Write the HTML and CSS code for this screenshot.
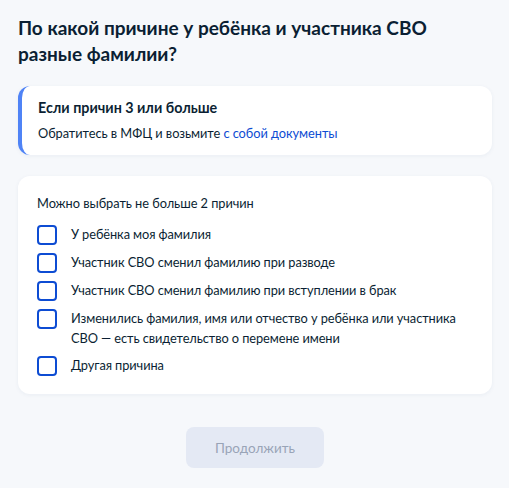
FILE: index.html
```html
<!DOCTYPE html>
<html lang="ru">
<head>
<meta charset="utf-8">
<link rel="stylesheet" href="styles.css">
</head>
<body>
<main class="page">
  <h1 class="title">По какой причине у ребёнка и участника СВО разные фамилии?</h1>
  <section class="info">
    <div class="info-title">Если причин 3 или больше</div>
    <div class="info-text">Обратитесь в МФЦ и возьмите <a class="link" href="#">с собой документы</a></div>
  </section>
  <section class="card">
    <div class="hint">Можно выбрать не больше 2 причин</div>
    <ul class="options">
      <li class="option"><span class="box"></span><span class="label">У ребёнка моя фамилия</span></li>
      <li class="option"><span class="box"></span><span class="label">Участник СВО сменил фамилию при разводе</span></li>
      <li class="option"><span class="box"></span><span class="label">Участник СВО сменил фамилию при вступлении в брак</span></li>
      <li class="option"><span class="box"></span><span class="label">Изменились фамилия, имя или отчество у ребёнка или участника СВО — есть свидетельство о перемене имени</span></li>
      <li class="option"><span class="box"></span><span class="label">Другая причина</span></li>
    </ul>
  </section>
  <div class="actions">
    <button class="btn" type="button">Продолжить</button>
  </div>
</main>
</body>
</html>
```

FILE: styles.css
```css
* { box-sizing: border-box; }
html, body { margin: 0; padding: 0; }
body {
  background: #f6f8fb;
  font-family: Lato, "Noto Sans", sans-serif;
  color: #0b1f33;
}
.page {
  padding: 15px 17px 0 18px;
}
.title {
  margin: 0;
  font-size: 19px;
  line-height: 26px;
  font-weight: 700;
  padding-right: 50px;
}
.info {
  margin-top: 19px;
  background: #fff;
  border-radius: 12px;
  border-left: 4px solid #4f83f6;
  padding: 12px 16px 12px 16px;
  box-shadow: 0 1px 4px rgba(30, 60, 120, 0.06);
}
.info-title {
  font-size: 14.3px;
  font-weight: 700;
  line-height: 20px;
}
.info-text {
  margin-top: 5px;
  font-size: 12.8px;
  letter-spacing: -0.05px;
  line-height: 20px;
}
.link {
  color: #0d4cd3;
  text-decoration: none;
}
.card {
  margin-top: 21px;
  background: #fff;
  border-radius: 12px;
  padding: 17px 14px 18px 19px;
  box-shadow: 0 1px 4px rgba(30, 60, 120, 0.06);
}
.hint {
  font-size: 12.8px;
  letter-spacing: -0.05px;
  line-height: 20px;
}
.options {
  list-style: none;
  margin: 12px 0 0 0;
  padding: 0;
  display: flex;
  flex-direction: column;
  gap: 8px;
}
.option {
  display: flex;
  align-items: flex-start;
  gap: 14px;
  font-size: 12.8px;
  letter-spacing: -0.08px;
  line-height: 20px;
}
.box {
  flex: none;
  width: 20px;
  height: 20px;
  border: 2px solid #0d4cd3;
  border-radius: 4px;
  background: #fff;
}
.label {
  margin-top: -1px;
}
.actions {
  display: flex;
  justify-content: center;
  margin-top: 33px;
}
.btn {
  width: 138px;
  height: 41px;
  border: none;
  border-radius: 8px;
  background: #e4e9f4;
  color: #99a4b7;
  font-family: Lato, "Noto Sans", sans-serif;
  font-size: 13.5px;
}
```
